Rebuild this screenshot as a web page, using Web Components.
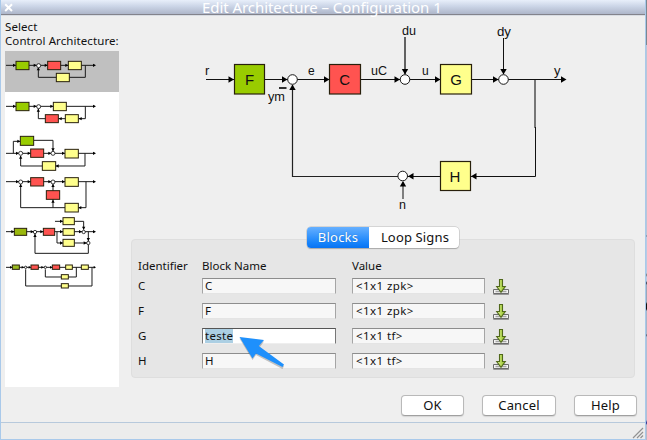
<!DOCTYPE html>
<html lang="en"><head><meta charset="utf-8"><title>Edit Architecture</title>
<style>
html,body{margin:0;width:647px;height:440px;overflow:hidden;background:#efefef}
body{font:12px/15px "Noto Sans","Open Sans",sans-serif;color:#111}
</style></head><body>
<app-window caption="Edit Architecture – Configuration 1">
  <architecture-list slot="side"></architecture-list>
  <loop-diagram></loop-diagram>
  <block-panel></block-panel>
  <button-row></button-row>
</app-window>
<script>
function define(name, html){
  customElements.define(name, class extends HTMLElement{
    constructor(){super();this.attachShadow({mode:'open'}).innerHTML=typeof html==='function'?html(this):html;}
  });
}
/* Small SVG helpers for block diagrams */
const line=(p,w=3,c='#1a1a1a')=>`<polyline points="${p}" fill="none" stroke="${c}" stroke-width="${w}"/>`;
const box=(x,y,w,h,c,s=3)=>`<rect x="${x}" y="${y}" width="${w}" height="${h}" fill="${c}" stroke="#28200c" stroke-width="${s}"/>`;
const sum=(x,y,r=6,s=2.5)=>`<circle cx="${x}" cy="${y}" r="${r}" fill="#fff" stroke="#161616" stroke-width="${s}"/>`;
const tip=(x,y,d='r',l=9,h=5)=>{
  const p={r:[[0,0],[-l,-h],[-l,h]],l:[[0,0],[l,-h],[l,h]],u:[[0,0],[-h,l],[h,l]],d:[[0,0],[-h,-l],[h,-l]]}[d];
  return `<polygon points="${p.map(q=>(x+q[0])+','+(y+q[1])).join(' ')}" fill="#000"/>`;};
const G='#99cc00',R='#ff5350',Y='#ffff8c';
const group=(x,y,s)=>`<g transform="translate(${x} ${y}) scale(.33333)">${s}</g>`;

define('app-window',el=>`<style>
:host{display:flex;width:647px;height:440px;background:#efefef}
.win{box-sizing:border-box;width:646px;height:440px;border:solid #a9c9ea;border-width:0 1px 1px;display:flex;flex-direction:column}
header{height:14px;flex:none;background:linear-gradient(#e8effa,#cbd5e7 45%,#aeb6c9);border-bottom:1px solid #83838b;box-shadow:0 1px #d9dde3;display:flex;color:#fff}
header svg{flex:none;margin:2px 0 0 2px}
.t{flex:1;font-size:15px;line-height:15px;padding-left:188px;letter-spacing:-.06px;white-space:nowrap}
main{height:406px;flex:none;display:flex;margin-top:1px}
.side{width:130px;flex:none}
.body{width:514px;display:flex;flex-direction:column}
footer{flex:1;border-top:1px solid #b7c9dc;background:#ececec;display:flex;justify-content:flex-end;align-items:flex-end}
.edge{width:1px;background:linear-gradient(#7a8791 0 45px,#b8c6d8 45px 235px,#6c7988 236px,#b9cbe2 237px 273px,#777 275px,#b9cbe2 277px 281px,#334 283px,#9aa7b8 285px 302px,#111 304px 309px,#a8b5c8 311px 334px,#556 335px,#b0bfd4 337px 420px,#21218a 423px,#b8b8c4 425px)}
</style><div class="win"><header><svg width="11" height="11"><path d="M2.2 2.2L9 9M9 2.2L2.2 9" stroke="#fff" stroke-width="2"/></svg><div class="t">${el.getAttribute('caption')}</div></header>
<main><div class="side"><slot name="side"></slot></div><div class="body"><slot></slot></div></main>
<footer><svg width="13" height="13"><path d="M1 12L11 2M5 12L11 6M8.500 12L11 9.500" stroke="#929292" stroke-width="1.200"/></svg></footer></div><div class="edge"></div>`);

const thumbs=
group(0,0,line('18,196 48,196')+line('86,196 285,196')+line('256,196 256,232 115,232 115,203')+tip(48,196)+tip(110,196)+tip(143,196)+tip(205,196)+tip(288,196)+tip(115,202,'u')
 +box(48,184,39,25,G)+sum(116,197)+box(143,184,39,25,R)+box(205,184,39,25,Y)+box(169,220,39,25,Y))
+group(0,95,line('18,34 285,34')+line('256,34 256,71 115,71 115,41')+tip(48,34)+tip(110,34)+tip(160,34)+tip(288,34)+tip(115,41,'u')+tip(176,71,'l')+tip(236,71,'l')
 +box(48,22,39,25,G)+sum(116,35)+box(160,22,39,25,Y)+box(136,59,39,24,R)+box(196,59,39,24,Y)
 +line('18,175 285,175')+line('40,175 40,139 61,139')+line('101,136 159,136 159,168')+line('255,175 255,213 62,213 62,183')+tip(61,139)+tip(57,175)+tip(92,175)+tip(154,175)+tip(195,175)+tip(288,175)+tip(159,169,'d')+tip(62,182,'u')+tip(167,213,'l')
 +box(61,124,40,27,G)+sum(62,175)+box(92,162,39,25,R)+sum(159,175)+box(195,163,40,26,Y)+box(127,200,40,26,Y)
 +line('18,260 285,260')+line('258,260 258,338 62,338 62,267')+line('159,338 159,267')+tip(57,260)+tip(92,260)+tip(154,260)+tip(195,260)+tip(288,260)+tip(62,267,'u')+tip(159,267,'u')+tip(159,314,'u')+tip(235,338,'l')
 +box(92,248,39,25,R)+box(195,248,40,26,Y)+sum(62,261)+sum(159,261)+box(139,287,40,26,R)+box(195,325,40,26,Y))
+group(0,190,line('18,125 285,125')+line('165,94 251,94 251,119')+line('171,125 171,159 265,159')+line('265,125 265,190 105,190 105,132')+tip(43,125)+tip(101,125)+tip(130,125)+tip(189,94)+tip(189,125)+tip(189,159)+tip(246,125)+tip(260,159)+tip(288,125)+tip(251,119,'d')+tip(265,153,'d')+tip(105,132,'u')
 +box(43,115,37,21,'#9ab80d')+sum(105,126,5)+box(130,115,34,21,R)+box(189,83,34,21,Y)+box(189,116,34,20,Y)+box(189,148,34,21,Y)+sum(251,126,5)+sum(265,159,5)
 +line('18,232 285,232')+line('229,232 229,261 136,261 136,238')+line('276,232 276,288 77,288 77,238')+tip(37,232,'r',7,4)+tip(72,232,'r',7,4)+tip(93,232,'r',7,4)+tip(131,232,'r',7,4)+tip(157,232,'r',7,4)+tip(288,232,'r',7,4)
 +box(37,225,21,13,'#9aba20')+sum(77,232,3.5)+box(93,225,22,13,R)+sum(136,232,3.5)+box(157,225,22,13,R)+box(197,225,20,13,Y)+box(244,225,21,13,Y)+box(184,254,21,13,Y)+box(184,281,21,13,Y));

define('architecture-list',`<style>
:host{display:block;padding:4px 0 0 4px}
.h{font-size:11.500px;line-height:14px;height:31px;white-space:nowrap;letter-spacing:.09px}
.list{width:114px;height:336px;background:#fff;display:flex}
svg{display:block}
</style><div class="h">Select<br>Control Architecture:</div><div class="list"><svg width="114" height="336" viewBox="5 51 114 336"><rect x="5" y="51" width="114" height="41" fill="#c0c0c0"/>${thumbs}</svg></div>`);

const t=(x,y,s,n=12,w)=>`<text x="${x}" y="${y}" font-size="${n}" ${w?`textLength="${w}" lengthAdjust="spacingAndGlyphs"`:''}>${s}</text>`;
const k='#111';
const A=(x,y,d)=>tip(x,y,d,5.5,3.2);
define('loop-diagram',`<style>:host{display:block;height:211px}svg{display:block}text{font-family:"Liberation Sans",Arial,sans-serif;fill:#111}</style>
<svg width="504" height="211" viewBox="131 16 504 211">
${line('206,79.5 562,79.5',1,k)}${line('405,37 405,74',1.5,'#333')}${line('503.500,38 503.500,74',1,k)}${line('535,80 535,128',2,'#777')}
${line('535.500,127 535.500,176.500 402,176.500',1,k)}${line('402,176.500 292.500,176.500 292.500,85',1.2,'#222')}${line('403,199 403,182',1.2,'#333')}
${A(234,79.500)}${A(287.500,79.500)}${A(329.500,79.500)}${A(400,79.500)}${A(440.500,79.500)}${A(498.500,79.500)}${A(566.500,79.500)}
${A(405,74.500,'d')}${A(503.500,74.500,'d')}${A(292.500,84.500,'u')}${A(403,181,'u')}${A(408,176.300,'l')}${A(471,176.300,'l')}
${box(234.500,64.500,30,29.500,G,1.2)}${box(329.500,64.500,31,29.500,R,1.2)}${box(440.500,64.500,31,29.500,Y,1.2)}${box(440.500,161.500,30,29,Y,1.2)}
${sum(292.500,79.500,4.8,1)}${sum(405,79.500,4.8,1)}${sum(503.500,79.500,4.8,1)}${sum(402.700,176,4.800,1)}
${line('279,88 286.500,88',1.6,'#000')}
${t(245,84.500,'F',15)}${t(339.200,84.700,'C',15)}${t(450.200,84.700,'G',15)}${t(449.500,181.500,'H',15)}
${t(205,75,'r',13)}${t(268,101,'ym',13,17)}${t(308,75,'e')}${t(371,75,'uC',13,16)}${t(422,75,'u')}${t(554,75,'y',13)}
${t(402,35,'du',13,14)}${t(497,36,'dy',13,14)}${t(399,209,'n',12.5)}
</svg>`);

define('text-field',`<style>
:host{display:flex;box-sizing:border-box;height:16px;border:1px solid #a5a5a5;border-top-color:#8d8d8d;border-bottom-color:#e4e4e4;background:#f7f7f7;padding-left:2px;line-height:14px;font-size:11.500px;white-space:nowrap}
:host([focus]){background:#fff;border-color:#777;border-top-color:#555;border-bottom-color:#eee}
:host([pad]){padding-left:3px}
:host([focus]) span{background:#accfe3}
span{display:block}
</style><span><slot></slot></span>`);
define('import-icon',`<style>:host{display:block;height:17px}svg{display:block}</style>
<svg width="17" height="18" viewBox="0 0 17 18"><defs><linearGradient id="g"><stop stop-color="#e4f59b"/><stop offset="1" stop-color="#8cbe1c"/></linearGradient></defs>
<rect x=".3" y="15.500" width="15.600" height="1.500" fill="#999"/><path d="M.5 11.500H15.500V15.500H.5Z" fill="#f5f5f5" stroke="#6d6d6d"/><path d="M2.500 13.500H13.500" stroke="#a5a5a5" stroke-width="1.500"/>
<path d="M6.500 1.500H9.500V8.500H12.300L8 14.300L3.700 8.500H6.500Z" fill="url(#g)" stroke="#50681b" stroke-width="1.100"/></svg>`);
define('block-row',el=>{const a=n=>el.getAttribute(n);return `<style>
:host{display:grid;grid-template-columns:64px 134px 16px 133px 8px 17px;height:25px;align-items:start;font-size:11.500px;line-height:16px}
text-field:first-of-type{grid-column:2}text-field:last-of-type{grid-column:4}import-icon{grid-column:6}
.over{letter-spacing:.28px}.v{letter-spacing:.42px}
</style><div>${a('id-name')}</div><text-field class="over" ${el.hasAttribute('active')?'focus':''}>${a('name')}</text-field><text-field pad class="v">${a('value')}</text-field><import-icon></import-icon>`});
define('tab-switch',`<style>
:host{display:flex;width:152px;height:21px;box-sizing:border-box;border-radius:4px;font-size:13px;line-height:20px;box-shadow:0 1px 1px #aaa,0 0 0 .5px #bbb;background:#fff;white-space:nowrap}
div{text-align:center;width:62px;letter-spacing:.2px}.on{background:linear-gradient(#66b0ff,#1683fb 75%,#0873f2);color:#fff;border-radius:4px 0 0 4px;text-shadow:0 0 1px #1464bb}
.off{width:90px;padding-left:2px;box-sizing:border-box;letter-spacing:.15px}
</style><div class="on">Blocks</div><div class="off">Loop Signs</div>`);
define('block-panel',`<style>
:host{display:flex;flex-direction:column;align-items:center;width:504px;height:151px;position:relative}
tab-switch{z-index:1;flex:none}
.p{box-sizing:border-box;width:504px;height:139px;flex:none;margin-top:-9px;background:#e6e6e6;border:1px solid #dedede;border-radius:4px;padding:18px 0 0 6px}
.h{display:grid;grid-template-columns:64px 150px 100px;height:20px;font-size:11.500px;line-height:15px;letter-spacing:0}
.pointer{position:absolute;left:105px;top:107px}
</style><tab-switch></tab-switch><div class="p"><div class="h"><span>Identifier</span><span>Block Name</span><span>Value</span></div>
<block-row id-name="C" name="C" value="&amp;lt;1x1 zpk>"></block-row><block-row id-name="F" name="F" value="&amp;lt;1x1 zpk>"></block-row><block-row id-name="G" name="teste" value="&amp;lt;1x1 tf>" active></block-row><block-row id-name="H" name="H" value="&amp;lt;1x1 tf>"></block-row></div>
<svg class="pointer" width="52" height="40" viewBox="236 334 52 40"><path d="M239.500 337.500L264 340.500L259.500 346.500L284 365L282.500 368L256 354L252.500 359Z" fill="#444" opacity=".3" transform="translate(0 1)"/><path d="M239.500 337L264 340L258.800 346L284 364.500L282.500 367L256 353.500L252.500 358.500Z" fill="#1e90fc"/></svg>`);
define('push-button',`<style>:host{display:block;box-sizing:border-box;height:21px;border:1px solid #b9b9b9;border-bottom-color:#a0a0a0;border-radius:4px;background:#fff;text-align:center;font-size:13px;line-height:19px;box-shadow:0 1px 1px #d5d5d5;letter-spacing:.15px}</style><slot></slot>`);
define('button-row',`<style>:host{display:grid;grid-template-columns:63px 74px 63px;gap:18px;justify-content:end;padding:17px 8px 0 0}</style><push-button>OK</push-button><push-button>Cancel</push-button><push-button>Help</push-button>`);
</script></body></html>
